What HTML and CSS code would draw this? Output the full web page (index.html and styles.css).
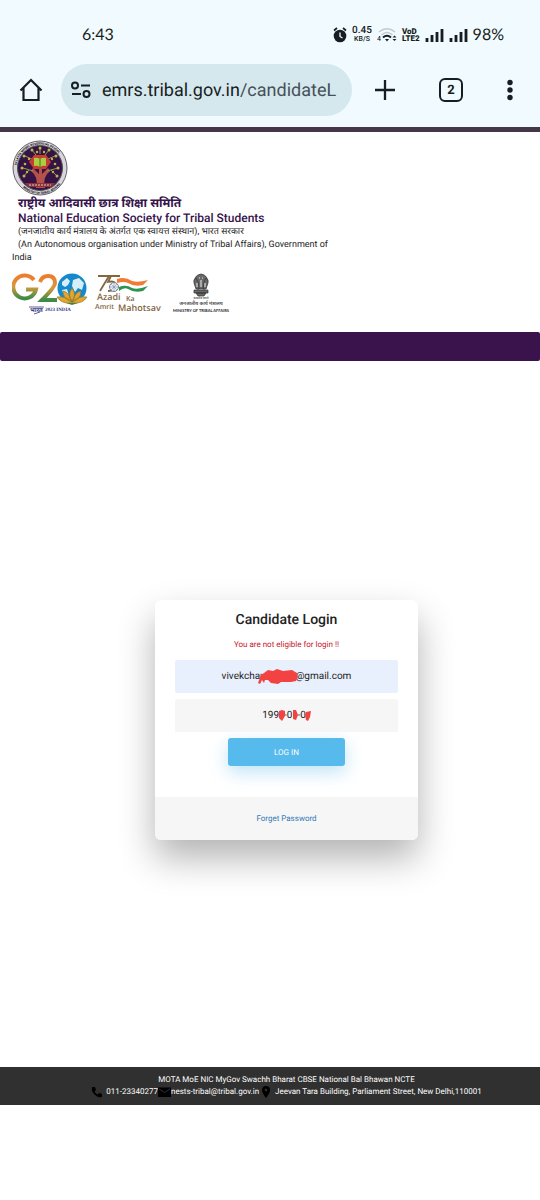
FILE: index.html
```html
<!DOCTYPE html>
<html lang="en">
<head>
    <meta charset="UTF-8">
    <meta name="viewport" content="width=device-width, initial-scale=1.0">
    <title>EMRS - Candidate Login</title>
    <link rel="stylesheet" href="styles.css">
</head>
<body>
    <div class="phone-bar">
        <div class="status-bar">
            <span class="clock">6:43</span>
            <div class="status-icons">
                <svg width="14" height="16" viewBox="0 0 14 16">
                    <circle cx="7" cy="9" r="6.3" fill="#171d20"/>
                    <path d="M1 3.5L4 1M13 3.5L10 1" stroke="#171d20" stroke-width="1.7"/>
                    <path d="M7 5.5V9.5L9.5 11" fill="none" stroke="#f1faff" stroke-width="1.3"/>
                </svg>
                <span class="net-speed"><b>0.45</b><small>KB/S</small></span>
                <svg width="20" height="16" viewBox="0 0 20 16">
                    <path d="M2 5Q10-1.5 18 5M4.500 8Q10 3 15.500 8" fill="none" stroke="#c3cbcf" stroke-width="1.6"/>
                    <path d="M6 10.500Q10 7 14 10.500" fill="none" stroke="#171d20" stroke-width="2"/>
                    <path d="M8 12H12L10 14.500Z" fill="#171d20"/>
                    <path d="M15.500 10.500L17.500 8.500L19.500 10.500ZM15.500 12L17.500 14L19.500 12Z" fill="#171d20"/>
                    <text class="svg-tiny" x="0" y="14">4</text>
                </svg>
                <span class="volte">VoD<br>LTE2</span>
                <svg width="19" height="14" viewBox="0 0 19 14">
                    <path d="M2 10V14M7 7V14M12 4V14M17 1V14" stroke="#171d20" stroke-width="2.800"/>
                </svg>
                <svg width="19" height="14" viewBox="0 0 19 14">
                    <path d="M2 10V14M7 7V14M12 4V14M17 1V14" stroke="#171d20" stroke-width="2.800"/>
                </svg>
                <span class="battery">98%</span>
            </div>
        </div>
        <div class="browser-bar">
            <button class="icon-button" type="button" aria-label="Home">
                <svg width="24" height="24" viewBox="0 0 24 24" fill="none" stroke="#171d20" stroke-width="2.2">
                    <path d="M1.500 12.500L12 2L22.500 12.500M4.500 10V22H19.500V10"/>
                </svg>
            </button>
            <button class="address-bar" type="button">
                <svg width="20" height="18" viewBox="0 0 20 18" fill="none" stroke="#171d20" stroke-width="2">
                    <circle cx="4" cy="4.500" r="3"/>
                    <path d="M10 4.500H19M1 13H10"/>
                    <circle cx="15.500" cy="13" r="3"/>
                </svg>
                <span class="url">emrs.tribal.gov.in<span class="url-path">/candidateL</span></span>
            </button>
            <div class="browser-actions">
                <button class="icon-button" type="button" aria-label="New tab">
                    <svg width="22" height="22" viewBox="0 0 22 22">
                        <path d="M11 1V21M1 11H21" stroke="#171d20" stroke-width="2.300"/>
                    </svg>
                </button>
                <button class="tab-count" type="button">2</button>
                <button class="icon-button" type="button" aria-label="Menu">
                    <svg width="8" height="22" viewBox="0 0 8 22" fill="#171d20">
                        <circle cx="4" cy="3.500" r="2.700"/>
                        <circle cx="4" cy="11" r="2.700"/>
                        <circle cx="4" cy="18.500" r="2.700"/>
                    </svg>
                </button>
            </div>
        </div>
    </div>

    <header class="site-header">
        <svg class="emblem" width="56" height="56" viewBox="0 0 56 56">
            <defs>
                <path id="ringTop" d="M4.500 28A23.500 23.500 0 0 1 51.500 28"/>
                <path id="ringBottom" d="M2 28A26 26 0 0 0 54 28"/>
            </defs>
            <circle cx="28" cy="28" r="27" fill="#d8d6da" stroke="#66616b"/>
            <circle cx="28" cy="28" r="22.500" fill="#351347" stroke="#555"/>
            <text class="ring-text"><textPath href="#ringTop" startOffset="3">EKLAVYA MODEL RESIDENTIAL SCHOOL</textPath></text>
            <text class="ring-text"><textPath href="#ringBottom" startOffset="22">MINISTRY OF TRIBAL AFFAIRS</textPath></text>
            <path d="M24 48Q27 37 19 31L21 28L27 34V24H30V34L36 28L38 31Q30 37 33 48Z" fill="#b4524a"/>
            <path d="M21 31L11 28M17 30L12 36M35 31L46 28M39 30L45 36M24 15L20 10M28 14V8M33 15L37 10M20 19L13 16M36 19L43 16" stroke="#97983c" fill="none"/>
            <g fill="#b4b948">
                <circle cx="10" cy="28" r="1.500"/><circle cx="12" cy="36" r="1.500"/><circle cx="15" cy="32" r="1.200"/>
                <circle cx="13" cy="24" r="1.300"/><circle cx="12" cy="16" r="1.500"/><circle cx="17" cy="19" r="1.200"/>
                <circle cx="20" cy="10" r="1.500"/><circle cx="25" cy="12" r="1.200"/><circle cx="28" cy="8" r="1.500"/>
                <circle cx="32" cy="12" r="1.200"/><circle cx="37" cy="10" r="1.500"/><circle cx="40" cy="19" r="1.200"/>
                <circle cx="44" cy="16" r="1.500"/><circle cx="43" cy="24" r="1.300"/><circle cx="46" cy="28" r="1.500"/>
                <circle cx="41" cy="32" r="1.200"/><circle cx="45" cy="36" r="1.500"/>
            </g>
            <path d="M22 15H34L39 22L34 29H22L17 22Z" fill="#c83c34"/>
            <path d="M22 18Q25 17 28 19Q31 17 34 18V26Q31 25 28 27Q25 25 22 26Z" fill="#a9cf3d"/>
            <path d="M28 19V27" stroke="#40742b"/>
            <path d="M13 43H43L40 47H16Z" fill="#8b3339"/>
            <path d="M17 45H39" stroke="#e2c9c4" stroke-dasharray="2 1"/>
        </svg>
        <div class="org-text">
            <h1 class="org-hindi" lang="hi">राष्ट्रीय आदिवासी छात्र शिक्षा समिति</h1>
            <h2 class="org-name">National Education Society for Tribal Students</h2>
            <p class="org-note" lang="hi">(जनजातीय कार्य मंत्रालय के अंतर्गत एक स्वायत्त संस्थान), भारत सरकार</p>
            <p class="org-note">(An Autonomous organisation under Ministry of Tribal Affairs), Government of India</p>
        </div>
        <div class="logos">
            <svg width="76" height="44" viewBox="0 0 76 44">
                <defs>
                    <linearGradient id="saffron" x1="0" y1="0" x2="0" y2="1">
                        <stop offset="0" stop-color="#ef7b2c"/>
                        <stop offset="0.5" stop-color="#d59a3b"/>
                        <stop offset="1" stop-color="#3d8b46"/>
                    </linearGradient>
                </defs>
                <path d="M22 7A11.500 11.500 0 1 0 24 16.500H14" fill="none" stroke="url(#saffron)" stroke-width="4"/>
                <path d="M28 9Q30 3 36 3Q43 3 43 10Q43 14 30 27H45" fill="none" stroke="url(#saffron)" stroke-width="4"/>
                <circle cx="60" cy="15" r="14.500" fill="#1689cc"/>
                <path d="M50 9L55 5L58 8L56 12L53 14L50 12ZM61 7L67 5L72 10L70 17L66 15L63 19L60 13ZM50 17L55 16L57 23L53 25Z" fill="#d8eef7"/>
                <path d="M60 29Q55 22 60 15Q65 22 60 29Q63 19 69 18Q69 26 60 29Q66 23 75 24Q71 31 60 30Q49 31 45 24Q54 23 60 29Q51 26 51 18Q57 19 60 29Z" fill="#e8a42f" stroke="#837c2e" stroke-width="0.700"/>
                <path d="M54 30H66L60 32Z" fill="#458444"/>
                <text class="g20-hindi" x="18" y="39">भारत</text>
                <text class="g20-year" x="33" y="38">2023 INDIA</text>
                <path d="M17 34H32M22 41L28 39" stroke="#33377f" stroke-width="0.800"/>
            </svg>
            <svg width="69" height="44" viewBox="0 0 69 44">
                <path d="M4 3H15L6 18M26 3H17L14 9Q22 7 22 13Q22 18 14 18" fill="none" stroke="#82673f" stroke-width="1.800"/>
                <circle cx="20" cy="14" r="4.500" fill="#edf1f6" stroke="#718198"/>
                <path d="M20 9V19M15 14H25M17 11L23 17M23 11L17 17" stroke="#718198" stroke-width="0.500"/>
                <path d="M23 6Q31 3 38 8Q44 10 54 7L49 12Q40 14 34 10Q30 8 23 10Z" fill="#f07b35"/>
                <path d="M25 14Q32 11 38 15Q44 17 54 13L49 18Q40 20 34 16Q30 14 25 18Z" fill="#2c9451"/>
                <text class="azadi" x="3" y="27">Azadi</text>
                <text class="azadi-small" x="32" y="28">Ka</text>
                <text class="azadi-small" x="1" y="36">Amrit</text>
                <text class="azadi" x="24" y="38">Mahotsav</text>
            </svg>
            <svg width="66" height="44" viewBox="0 0 66 44">
                <g fill="#686868" stroke="#303030" stroke-width="0.700">
                    <path d="M26 9Q25 4 29 2Q32 0 35 2Q39 4 38 9L36 16H28Z"/>
                    <path d="M27 5Q24 6 25 10L27 16H30L29 9ZM37 5Q40 6 39 10L37 16H34L35 9Z"/>
                    <path d="M25 17H39V20H25ZM27 20H37L35 23H29Z"/>
                </g>
                <path d="M30 5H31M33 5H34M32 7V14M28 10V14M36 10V14" stroke="#ededed"/>
                <text class="ministry-motto" x="32" y="26">सत्यमेव जयते</text>
                <text class="ministry-hindi" x="32" y="32">जनजातीय कार्य मंत्रालय</text>
                <text class="ministry" x="32" y="39">MINISTRY OF TRIBAL AFFAIRS</text>
            </svg>
        </div>
    </header>
    <div class="nav-strip"></div>

    <main class="content">
        <section class="login-card">
            <form class="login-form">
                <h2 class="login-title">Candidate Login</h2>
                <p class="error-message">You are not eligible for login !!</p>
                <div class="field">
                    <input class="email-input" type="text" aria-label="Email" value="vivekchau&nbsp;&nbsp;&nbsp;&nbsp;&nbsp;&nbsp;&nbsp;&nbsp;&nbsp;&nbsp;&nbsp;&nbsp;@gmail.com">
                    <svg class="scribble scribble-email" width="42" height="16" viewBox="0 0 42 16">
                        <path d="M3 6L6 4L10 1L15 2L19 0L25 2L34 1L39 4L40 8L38 12L33 13L23 13L20 15L13 14L10 11L7 11L6 14L4 11L2 15L0 14Z" fill="#f24242"/>
                    </svg>
                </div>
                <div class="field">
                    <input class="dob-input" type="text" aria-label="Date of birth" value="199&nbsp;&nbsp;-0&nbsp;&nbsp;-0&nbsp;&nbsp;">
                    <svg class="scribble scribble-dob" width="34" height="14" viewBox="0 0 34 14">
                        <path d="M1 2L4 1L7 2L7 7L4 12L1 9ZM15 1L18 1L20 6L18 11L15 10ZM28 3L33 2L32 8L30 12L28 11L27 6Z" fill="#f24242"/>
                    </svg>
                </div>
                <button class="login-button" type="submit">LOG IN</button>
            </form>
            <div class="card-footer">
                <a class="forgot-link" href="#">Forget Password</a>
            </div>
        </section>
    </main>

    <footer class="site-footer">
        <p class="footer-links">MOTA MoE NIC MyGov Swachh Bharat CBSE National Bal Bhawan NCTE</p>
        <div class="contact">
            <svg width="12" height="12" viewBox="0 0 12 12">
                <path d="M1 1H4L5 4L3.500 5.500Q4.500 7.500 6.500 8.500L8 7L11 8V11Q7 12 3.500 8.500Q0 5 1 1Z"/>
            </svg>
            <span class="phone">011-23340277</span>
            <svg width="13" height="12" viewBox="0 0 13 12">
                <path d="M0 1.500H13V11H0Z"/>
                <path d="M1 3L6.500 6.500L12 3" fill="none" stroke="#303030"/>
            </svg>
            <span>nests-tribal@tribal.gov.in</span>
            <svg class="pin" width="8" height="12" viewBox="0 0 8 12">
                <path d="M4 0Q8 0 8 4Q8 7 4 12Q0 7 0 4Q0 0 4 0Z"/>
                <circle cx="4" cy="4" r="1.300" fill="#303030"/>
            </svg>
            <span>Jeevan Tara Building, Parliament Street, New Delhi,110001</span>
        </div>
    </footer>
</body>
</html>
```
FILE: styles.css
```css
* {
    box-sizing: border-box;
}

body {
    margin: 0;
    background-color: #fff;
    color: #222;
    font-family: Roboto, "Noto Sans", sans-serif;
    text-rendering: geometricPrecision;
}

h1,
h2,
p {
    margin: 0;
}

svg {
    display: block;
    flex-shrink: 0;
}

button,
input {
    font-family: inherit;
    text-rendering: inherit;
}

/* Phone and browser bars */
.phone-bar {
    background-color: #f1faff;
    border-bottom: 5px solid #453648;
    color: #171d20;
}

.status-bar {
    display: flex;
    align-items: center;
    justify-content: space-between;
    height: 64px;
    padding: 5px 36px 0 82px;
}

.clock {
    font-family: Lato, sans-serif;
    font-size: 16px;
}

.status-icons {
    display: flex;
    align-items: center;
    gap: 5px;
}

.net-speed {
    display: flex;
    flex-direction: column;
    align-items: center;
    line-height: 8px;
}

.net-speed b {
    font-size: 10px;
    font-weight: 500;
}

.net-speed small {
    font-size: 7px;
    font-weight: 500;
}

.svg-tiny {
    font-size: 7px;
}

.volte {
    font-size: 8px;
    font-weight: 900;
    line-height: 7px;
}

.battery {
    font-family: Lato, sans-serif;
    font-size: 16px;
}

.browser-bar {
    display: flex;
    align-items: center;
    height: 63px;
    padding: 0 26px 11px 19px;
}

.icon-button {
    padding: 0;
    border: none;
    background: none;
}

.address-bar {
    display: flex;
    align-items: center;
    gap: 11px;
    width: 291px;
    height: 52px;
    margin: 0 22px 0 18px;
    padding: 0 10px;
    border: none;
    border-radius: 26px;
    background-color: #d5e8ee;
    color: #171d20;
    overflow: hidden;
}

.url {
    font-size: 18px;
    white-space: nowrap;
}

.url-path {
    color: #465057;
}

.browser-actions {
    display: flex;
    flex: 1;
    align-items: center;
    justify-content: space-between;
}

.tab-count {
    width: 24px;
    height: 24px;
    padding: 0;
    border: 2px solid #171d20;
    border-radius: 6px;
    background: none;
    color: #171d20;
    font-size: 13px;
    font-weight: bold;
}

/* Site header */
.site-header {
    padding: 8px 200px 15px 12px;
}

.org-text {
    color: #222;
}

.org-hindi,
.org-name {
    padding-left: 6px;
    color: #35134b;
    font-size: 12px;
    font-weight: 500;
    line-height: 15px;
}

.org-hindi {
    font-weight: bold;
}

.org-note {
    font-size: 9px;
    line-height: 13px;
    text-indent: 6px;
}

.logos {
    display: flex;
    gap: 6px;
    margin-top: 8px;
}

.ring-text {
    font-size: 3px;
    font-weight: bold;
}

.g20-hindi {
    fill: #33377f;
    font-size: 6px;
    font-weight: bold;
}

.g20-year {
    fill: #33377f;
    font-family: "Liberation Serif", serif;
    font-size: 5px;
    font-weight: bold;
}

.azadi,
.azadi-small {
    fill: #82673f;
    font-family: "Open Sans", sans-serif;
    font-size: 9px;
    font-weight: 600;
}

.azadi-small {
    font-size: 7px;
}

.ministry-motto,
.ministry-hindi,
.ministry {
    fill: #222;
    font-size: 5px;
    font-weight: 500;
    text-anchor: middle;
}

.ministry {
    font-family: Lato, sans-serif;
    font-size: 4px;
    font-weight: bold;
}

.ministry-motto {
    font-size: 3px;
}

.nav-strip {
    height: 29px;
    border-radius: 2px;
    background-color: #3a134d;
}

/* Login */
.content {
    display: flex;
    justify-content: center;
    padding: 239px 0 227px 33px;
}

.login-card {
    width: 263px;
    border-radius: 6px;
    background-color: #fff;
    box-shadow: 0 18px 36px rgba(0, 0, 0, 0.3);
    overflow: hidden;
    text-align: center;
}

.login-form {
    padding: 11px 20px 31px;
}

.login-title {
    font-size: 14px;
    font-weight: 500;
    line-height: 18px;
}

.error-message {
    margin: 10px 0;
    color: #c5202c;
    font-size: 8px;
    line-height: 11px;
}

.field {
    position: relative;
    margin-bottom: 6px;
}

.email-input,
.dob-input {
    display: block;
    width: 100%;
    height: 33px;
    padding: 0;
    border: none;
    border-radius: 2px;
    background-color: #f6f6f6;
    color: #222;
    font-size: 10px;
    text-align: center;
}

.email-input {
    background-color: #e8effd;
}

.scribble {
    position: absolute;
}

.scribble-email {
    top: 9px;
    left: 83px;
}

.scribble-dob {
    top: 10px;
    left: 103px;
}

.login-button {
    width: 117px;
    height: 28px;
    border: none;
    border-radius: 3px;
    background-color: #56baed;
    box-shadow: 0 6px 18px rgba(95, 186, 233, 0.4);
    color: #fff;
    font-size: 8px;
    cursor: pointer;
}

.card-footer {
    padding: 15px;
    background-color: #f6f6f6;
    font-size: 8px;
    line-height: 13px;
}

.forgot-link {
    color: #337ab7;
    text-decoration: none;
}

/* Footer */
.site-footer {
    padding: 7px 0 7px 33px;
    background-color: #303030;
    color: #fff;
    font-size: 8px;
    line-height: 12px;
    text-align: center;
}

.contact {
    display: flex;
    align-items: center;
    justify-content: center;
}

.phone {
    margin-left: 3px;
}

.pin {
    margin: 0 5px 0 3px;
}
```
